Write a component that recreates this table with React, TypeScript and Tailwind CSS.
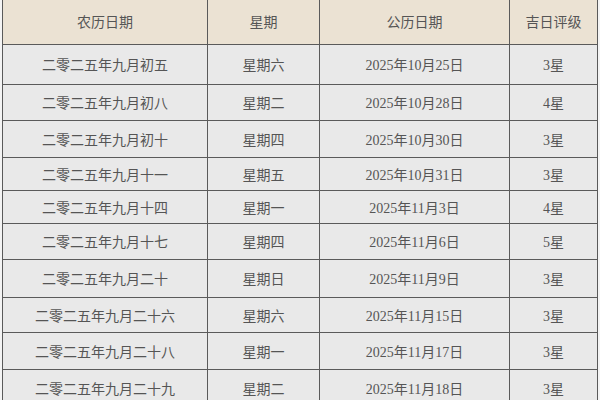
import React from "react";

const rows: [string, string, string, string, number][] = [
  ["二零二五年九月初五", "星期六", "2025年10月25日", "3星", 40],
  ["二零二五年九月初八", "星期二", "2025年10月28日", "4星", 36],
  ["二零二五年九月初十", "星期四", "2025年10月30日", "3星", 37],
  ["二零二五年九月十一", "星期五", "2025年10月31日", "3星", 33],
  ["二零二五年九月十四", "星期一", "2025年11月3日", "4星", 33],
  ["二零二五年九月十七", "星期四", "2025年11月6日", "5星", 36],
  ["二零二五年九月二十", "星期日", "2025年11月9日", "3星", 38],
  ["二零二五年九月二十六", "星期六", "2025年11月15日", "3星", 35],
  ["二零二五年九月二十八", "星期一", "2025年11月17日", "3星", 37],
  ["二零二五年九月二十九", "星期二", "2025年11月18日", "3星", 37],
];

const hFor: Record<number, string> = {
  40: "h-[40px]",
  36: "h-[36px]",
  37: "h-[37px]",
  33: "h-[33px]",
  38: "h-[38px]",
  35: "h-[35px]",
};

export default function App() {
  return (
    <div
      className="w-[600px] h-[400px] overflow-hidden bg-[#f4f4f4] pl-[2px]"
      style={{ fontFamily: '"Liberation Serif", "Noto Sans CJK SC", serif' }}
    >
      <table className="border-collapse -mt-[1px] text-[14px] text-[#555] table-fixed w-[595px]">
        <colgroup>
          <col className="w-[205px]" />
          <col className="w-[112px]" />
          <col className="w-[190px]" />
          <col className="w-[88px]" />
        </colgroup>
        <thead>
          <tr className="h-[45px] bg-[#ebe2d3]">
            {["农历日期", "星期", "公历日期", "吉日评级"].map((t) => (
              <th key={t} className="border border-[#5a5a5a] font-normal text-center p-0">
                {t}
              </th>
            ))}
          </tr>
        </thead>
        <tbody>
          {rows.map((r) => (
            <tr key={r[0]} className={`${hFor[r[4]]} bg-[#e9e9e9]`}>
              {r.slice(0, 4).map((c, i) => (
                <td key={i} className="border border-[#5a5a5a] text-center p-0 pt-[2px]">
                  {c as string}
                </td>
              ))}
            </tr>
          ))}
        </tbody>
      </table>
    </div>
  );
}
